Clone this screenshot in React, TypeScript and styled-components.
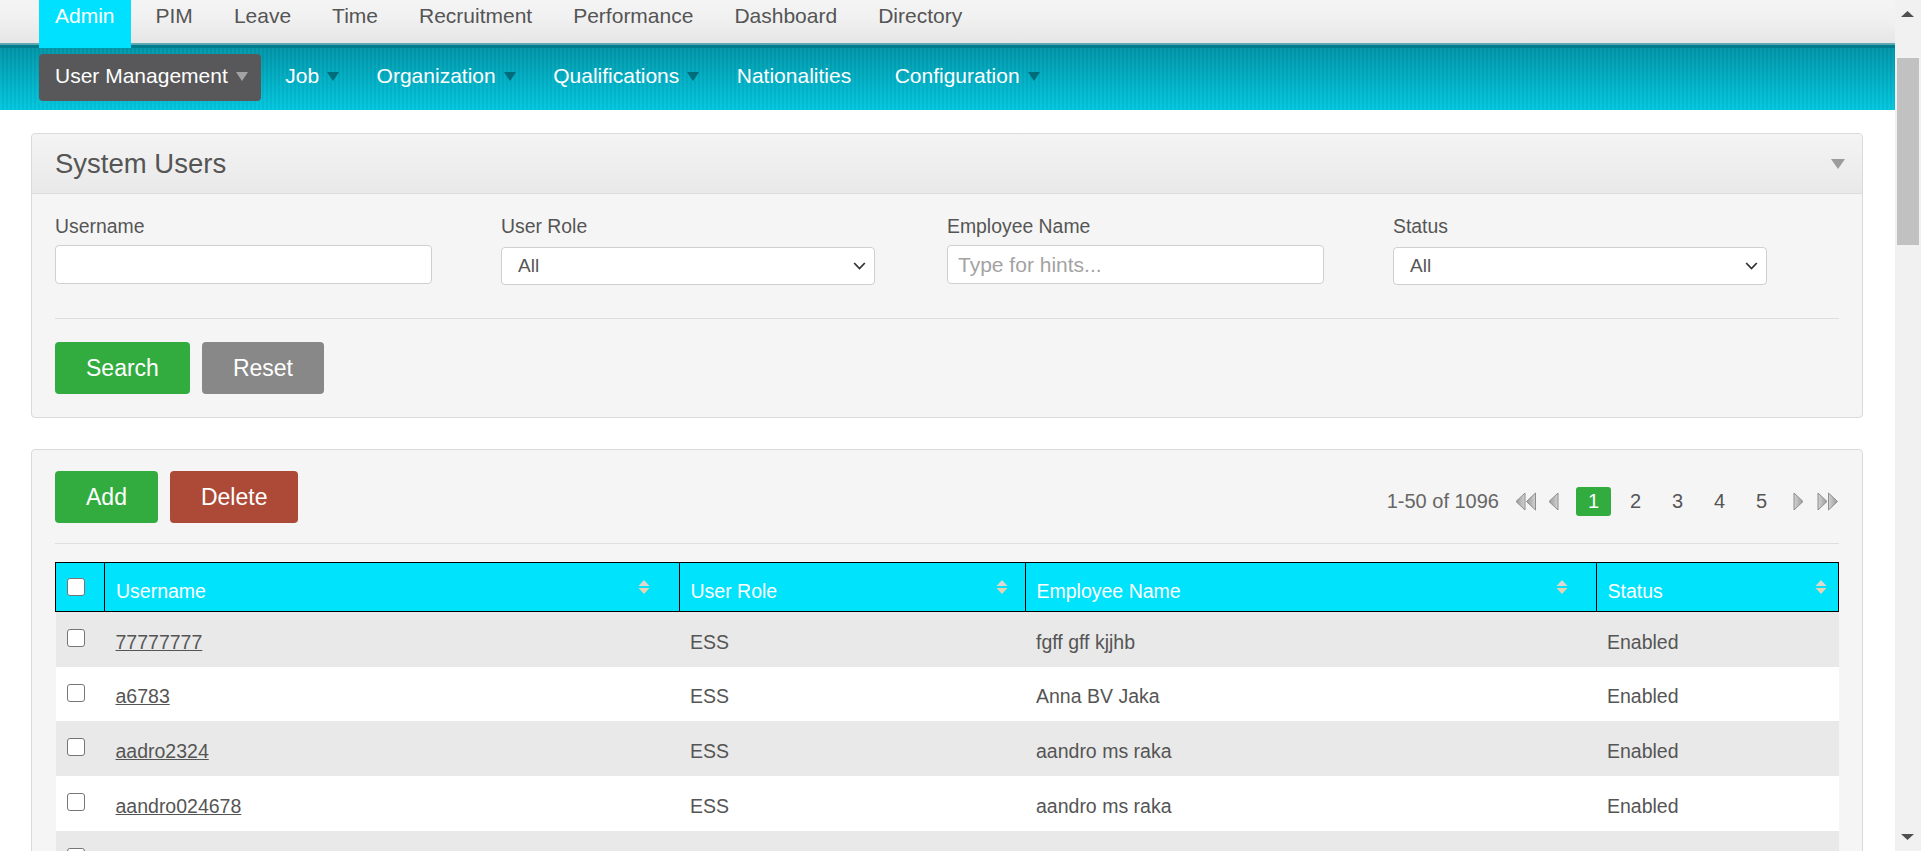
import React from "react";
import styled, { createGlobalStyle } from "styled-components";

const GlobalStyle = createGlobalStyle`
  body {
    margin: 0;
    background: #fff;
    font-family: "Liberation Sans", Arial, sans-serif;
    color: #555;
  }
`;

const Page = styled.div`
  margin-right: 26px;
`;

/* browser scrollbar as seen in the screenshot */
const ScrollRail = styled.div`
  position: fixed;
  top: 0;
  right: 0;
  bottom: 0;
  width: 26px;
  background: #f1f1f1;
`;

const ScrollThumb = styled.div`
  position: absolute;
  top: 58px;
  left: 2px;
  width: 22px;
  height: 187px;
  background: #c1c1c1;
`;

const ScrollArrow = styled.svg<{ $down?: boolean }>`
  position: absolute;
  left: 6px;
  ${(p) => (p.$down ? "bottom: 11px;" : "top: 11px;")}
`;

/* ---------- top menu ---------- */

const TopBar = styled.nav`
  display: flex;
  gap: 9px;
  height: 48px;
  padding-left: 39px;
  background: linear-gradient(
    to bottom,
    #f4f4f4 0,
    #f1f1f1 18px,
    #e6e6e6 43px,
    #5aa9b3 43px,
    #5aa9b3 45.5px,
    #007c8c 45.5px,
    #007c8c 48px
  );
`;

const TopTab = styled.a<{ $active?: boolean }>`
  display: block;
  box-sizing: border-box;
  height: 48px;
  padding: 2px 16px 0;
  font-size: 21px;
  line-height: 28px;
  text-decoration: none;
  color: ${(p) => (p.$active ? "#fff" : "#555")};
  background: ${(p) => (p.$active ? "#00e1ff" : "transparent")};
`;

const SubBar = styled.nav`
  display: flex;
  gap: 8px;
  box-sizing: border-box;
  height: 62px;
  padding: 6px 0 0 39px;
  background: repeating-linear-gradient(
      90deg,
      rgba(255, 255, 255, 0.035) 0 2px,
      rgba(0, 0, 0, 0.025) 2px 4px
    ),
    linear-gradient(to bottom, #0094a7, #00c6de);
`;

const SubItem = styled.a<{ $active?: boolean; $menu?: boolean }>`
  display: flex;
  align-items: center;
  box-sizing: border-box;
  height: 47px;
  padding: 0 ${(p) => (p.$menu ? 13.5 : 19.5)}px 3px 16px;
  border-radius: 4px;
  font-size: 21px;
  color: #fff;
  text-decoration: none;
  background: ${(p) => (p.$active ? "#58585a" : "transparent")};
`;

const Caret = styled.svg`
  margin-left: 8px;
  flex: none;
`;

/* ---------- panels ---------- */

const Main = styled.main`
  display: flex;
  flex-direction: column;
  gap: 31px;
  padding: 23px 32px 0 31px;
`;

const Panel = styled.section`
  border: 1px solid #dadada;
  border-radius: 4px;
  background: #f5f5f5;
`;

const PanelHead = styled.header`
  display: flex;
  align-items: center;
  justify-content: space-between;
  height: 59px;
  padding: 0 17px 0 23px;
  border-bottom: 1px solid #dcdcdc;
  border-radius: 4px 4px 0 0;
  background: linear-gradient(to bottom, #f4f4f4, #e9e9e9);
`;

const Title = styled.h1`
  margin: 0;
  font-size: 27.5px;
  font-weight: normal;
  color: #555;
`;

const PanelBody = styled.div`
  padding: 21px 23px 23px;
`;

const FilterGrid = styled.div`
  display: grid;
  grid-template-columns: repeat(4, 1fr);
  padding-bottom: 33px;
`;

const Field = styled.div`
  display: flex;
  flex-direction: column;
`;

const Label = styled.label`
  font-size: 19.4px;
  line-height: 23.4px;
  margin-bottom: 7px;
  color: #555;
`;

const TextInput = styled.input`
  box-sizing: border-box;
  width: 377px;
  height: 39px;
  padding: 0 10px;
  border: 1px solid #cfcfcf;
  border-radius: 4px;
  background: #fff;
  font-family: inherit;
  font-size: 21px;
  color: #555;
  outline: none;
  &::placeholder {
    color: #a3a3a3;
  }
`;

const SelectBox = styled.div`
  position: relative;
  box-sizing: border-box;
  width: 374px;
  height: 38px;
  margin-top: 2px;
  border: 1px solid #cfcfcf;
  border-radius: 4px;
  background: #fff;
  display: flex;
  align-items: center;
  padding-left: 16px;
  font-size: 19px;
  color: #555;
`;

const Chevron = styled.svg`
  position: absolute;
  right: 8px;
  top: 50%;
  transform: translateY(-50%);
`;

const Divider = styled.hr<{ $gap?: number }>`
  margin: 0 0 ${(p) => p.$gap ?? 23}px;
  border: 0;
  border-top: 1px solid #dedede;
`;

const Row = styled.div`
  display: flex;
  align-items: center;
  gap: 12px;
`;

const Button = styled.button<{ $tone: "green" | "gray" | "red" }>`
  height: 52px;
  padding: 0 31px;
  border: 0;
  border-radius: 4px;
  font-family: inherit;
  font-size: 23px;
  color: #fff;
  background: ${(p) =>
    p.$tone === "green" ? "#33ac3f" : p.$tone === "red" ? "#ac4a37" : "#888888"};
`;

const Toolbar = styled.div`
  display: flex;
  align-items: center;
  justify-content: space-between;
  margin-bottom: 20px;
`;

const Pager = styled.div`
  display: flex;
  align-items: center;
  margin-top: 8px;
  font-size: 20px;
  color: #666;
`;

const PagerIcon = styled.svg<{ $ml: number }>`
  margin-left: ${(p) => p.$ml}px;
  flex: none;
`;

const PageNums = styled.div`
  display: flex;
  gap: 7px;
  margin-left: 16px;
`;

const PageNum = styled.span<{ $current?: boolean }>`
  display: flex;
  align-items: center;
  justify-content: center;
  width: 35px;
  height: 29px;
  border-radius: 3px;
  color: ${(p) => (p.$current ? "#fff" : "#555")};
  background: ${(p) => (p.$current ? "#33ac3f" : "transparent")};
`;

/* ---------- table ---------- */

const Table = styled.table`
  width: 100%;
  margin-top: 18px;
  border-collapse: collapse;
  table-layout: fixed;
  font-size: 19.5px;
`;

const Th = styled.th`
  position: relative;
  box-sizing: border-box;
  height: 49px;
  padding: 9px 0 0 11px;
  border: 1px solid #000;
  background: #00e3fc;
  color: #fff;
  font-weight: normal;
  text-align: left;
  vertical-align: middle;
`;

const CheckTh = styled(Th)`
  padding: 0 0 0 11px;
`;

const SortIcon = styled.svg`
  position: absolute;
  top: 50%;
  left: calc((100% - 12px) * 0.95);
  transform: translateY(-50%);
`;

const Tr = styled.tr<{ $odd: boolean }>`
  height: 54.75px;
  background: ${(p) => (p.$odd ? "#e9e9e9" : "#fff")};
`;

const Td = styled.td`
  box-sizing: border-box;
  padding: 5px 0 0 11px;
  color: #555;
  vertical-align: middle;
  white-space: nowrap;
`;

const CheckTd = styled.td`
  box-sizing: border-box;
  padding: 17px 0 0 11px;
  vertical-align: top;
`;

const Check = styled.input.attrs({ type: "checkbox" })`
  appearance: none;
  display: block;
  box-sizing: border-box;
  width: 18px;
  height: 18px;
  margin: 0;
  border: 1.5px solid #767676;
  border-radius: 3px;
  background: #fff;
`;

const UserLink = styled.a`
  color: #555;
  text-decoration: underline;
`;

/* ---------- data ---------- */

const topItems = [
  "Admin",
  "PIM",
  "Leave",
  "Time",
  "Recruitment",
  "Performance",
  "Dashboard",
  "Directory",
];

const subItems = [
  { label: "User Management", menu: true, active: true },
  { label: "Job", menu: true },
  { label: "Organization", menu: true },
  { label: "Qualifications", menu: true },
  { label: "Nationalities" },
  { label: "Configuration", menu: true },
];

// the fifth row only peeks in at the bottom edge, so it is left without text
const users = [
  { name: "77777777", role: "ESS", employee: "fgff gff kjjhb", status: "Enabled" },
  { name: "a6783", role: "ESS", employee: "Anna BV Jaka", status: "Enabled" },
  { name: "aadro2324", role: "ESS", employee: "aandro ms raka", status: "Enabled" },
  { name: "aandro024678", role: "ESS", employee: "aandro ms raka", status: "Enabled" },
  { name: "", role: "", employee: "", status: "" },
];

const columns = [
  { label: "Username", width: 574.5 },
  { label: "User Role", width: 346 },
  { label: "Employee Name", width: 571 },
  { label: "Status" },
];

/* ---------- small drawings ---------- */

const MenuCaret = ({ light }: { light?: boolean }) => (
  <Caret width="12" height="9" viewBox="0 0 12 9">
    <polygon points="0,0 12,0 6,9" fill={light ? "#a3a3a3" : "#006b7b"} />
  </Caret>
);

const Sort = () => (
  <SortIcon width="12" height="15" viewBox="0 0 12 15">
    <polygon points="6,0.5 11.5,6.5 0.5,6.5" fill="#dcd8cf" />
    <polygon points="0.5,8.5 11.5,8.5 6,14.5" fill="#e6d3b2" />
  </SortIcon>
);

const Tri = ({ x, dir }: { x: number; dir: "l" | "r" }) => (
  <polygon
    points={
      dir === "l"
        ? `${x + 10},1 ${x + 1},9.5 ${x + 10},18`
        : `${x + 1},1 ${x + 10},9.5 ${x + 1},18`
    }
    fill={dir === "l" ? "url(#pgLeft)" : "url(#pgRight)"}
    stroke="#8e8e8e"
    strokeWidth="1"
    strokeLinejoin="round"
  />
);

const PagerArrow = ({
  dir,
  double,
  ml,
}: {
  dir: "l" | "r";
  double?: boolean;
  ml: number;
}) => (
  <PagerIcon
    $ml={ml}
    width={double ? 22 : 12}
    height="19"
    viewBox={`0 0 ${double ? 22 : 12} 19`}
  >
    <defs>
      <linearGradient id="pgLeft" x1="0" y1="0" x2="1" y2="0">
        <stop offset="0" stopColor="#9a9a9a" />
        <stop offset="1" stopColor="#d2d2d2" />
      </linearGradient>
      <linearGradient id="pgRight" x1="0" y1="0" x2="1" y2="0">
        <stop offset="0" stopColor="#d2d2d2" />
        <stop offset="1" stopColor="#9a9a9a" />
      </linearGradient>
    </defs>
    <Tri x={0} dir={dir} />
    {double && <Tri x={10.5} dir={dir} />}
  </PagerIcon>
);

const SelectField = ({ label }: { label: string }) => (
  <Field>
    <Label>{label}</Label>
    <SelectBox>
      All
      <Chevron width="13" height="9" viewBox="0 0 13 9">
        <polyline
          points="1.2,1.5 6.5,7 11.8,1.5"
          fill="none"
          stroke="#333"
          strokeWidth="1.8"
        />
      </Chevron>
    </SelectBox>
  </Field>
);

export default function App() {
  return (
    <Page>
      <GlobalStyle />
      <TopBar>
        {topItems.map((t, i) => (
          <TopTab key={t} $active={i === 0}>
            {t}
          </TopTab>
        ))}
      </TopBar>
      <SubBar>
        {subItems.map((s) => (
          <SubItem key={s.label} $active={s.active} $menu={s.menu}>
            {s.label}
            {s.menu && <MenuCaret light={s.active} />}
          </SubItem>
        ))}
      </SubBar>

      <Main>
        <Panel>
          <PanelHead>
            <Title>System Users</Title>
            <svg width="14" height="10" viewBox="0 0 14 10">
              <polygon points="0,0 14,0 7,10" fill="#9c9c9c" />
            </svg>
          </PanelHead>
          <PanelBody>
            <FilterGrid>
              <Field>
                <Label>Username</Label>
                <TextInput />
              </Field>
              <SelectField label="User Role" />
              <Field>
                <Label>Employee Name</Label>
                <TextInput placeholder="Type for hints..." />
              </Field>
              <SelectField label="Status" />
            </FilterGrid>
            <Divider $gap={23} />
            <Row>
              <Button $tone="green">Search</Button>
              <Button $tone="gray">Reset</Button>
            </Row>
          </PanelBody>
        </Panel>

        <Panel>
          <PanelBody>
            <Toolbar>
              <Row>
                <Button $tone="green">Add</Button>
                <Button $tone="red">Delete</Button>
              </Row>
              <Pager>
                1-50 of 1096
                <PagerArrow dir="l" double ml={16} />
                <PagerArrow dir="l" ml={11} />
                <PageNums>
                  {[1, 2, 3, 4, 5].map((n) => (
                    <PageNum key={n} $current={n === 1}>
                      {n}
                    </PageNum>
                  ))}
                </PageNums>
                <PagerArrow dir="r" ml={14} />
                <PagerArrow dir="r" double ml={12} />
              </Pager>
            </Toolbar>
            <Divider $gap={0} />
            <Table>
              <colgroup>
                <col style={{ width: 49 }} />
                {columns.map((c) => (
                  <col key={c.label} style={c.width ? { width: c.width } : undefined} />
                ))}
              </colgroup>
              <thead>
                <tr>
                  <CheckTh>
                    <Check />
                  </CheckTh>
                  {columns.map((c) => (
                    <Th key={c.label}>
                      {c.label}
                      <Sort />
                    </Th>
                  ))}
                </tr>
              </thead>
              <tbody>
                {users.map((u, i) => (
                  <Tr key={i} $odd={i % 2 === 0}>
                    <CheckTd>
                      <Check />
                    </CheckTd>
                    <Td>{u.name && <UserLink href="#">{u.name}</UserLink>}</Td>
                    <Td>{u.role}</Td>
                    <Td>{u.employee}</Td>
                    <Td>{u.status}</Td>
                  </Tr>
                ))}
              </tbody>
            </Table>
          </PanelBody>
        </Panel>
      </Main>

      <ScrollRail>
        <ScrollArrow width="13" height="6" viewBox="0 0 13 6">
          <polygon points="6.5,0 13,6 0,6" fill="#505050" />
        </ScrollArrow>
        <ScrollThumb />
        <ScrollArrow $down width="13" height="6" viewBox="0 0 13 6">
          <polygon points="0,0 13,0 6.5,6" fill="#505050" />
        </ScrollArrow>
      </ScrollRail>
    </Page>
  );
}
